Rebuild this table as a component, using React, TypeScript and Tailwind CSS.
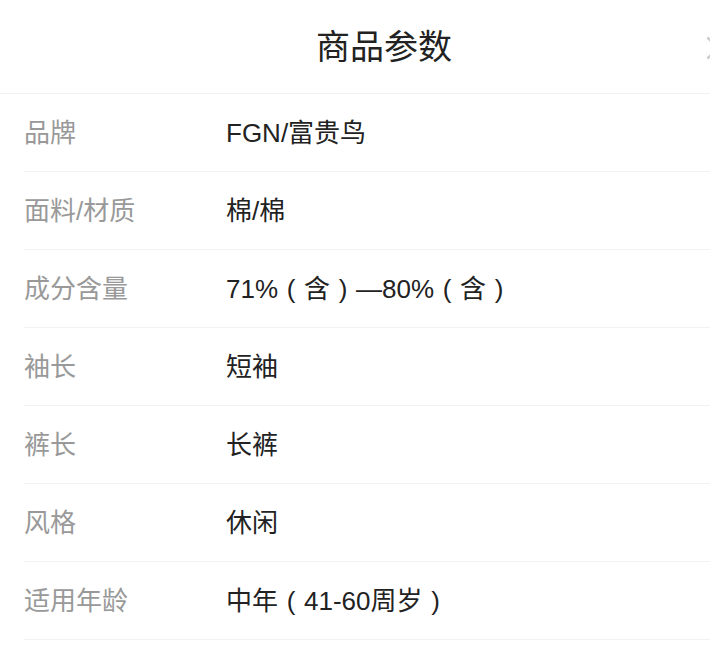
const params = [
  { label: "品牌", value: "FGN/富贵鸟" },
  { label: "面料/材质", value: "棉/棉" },
  { label: "成分含量", value: "71%（含）—80%（含）" },
  { label: "袖长", value: "短袖" },
  { label: "裤长", value: "长裤" },
  { label: "风格", value: "休闲" },
  { label: "适用年龄", value: "中年（41-60周岁）" },
];

// full-width brackets drawn centred in their cell, as in the reference font
const renderValue = (text: string) =>
  text.split(/([（）])/).map((part, i) =>
    part === "（" || part === "）" ? (
      <span key={i} className="inline-block w-[26px] text-center">
        {part === "（" ? "(" : ")"}
      </span>
    ) : (
      <span key={i}>{part}</span>
    )
  );

const App = () => {
  return (
    <div
      className="w-full h-[649px] overflow-hidden bg-white"
      style={{ fontFamily: '"Liberation Sans", "Noto Sans CJK SC", sans-serif' }}
    >
      <div className="relative w-[768px]">
        {/* header */}
        <div className="h-[94px] flex items-center justify-center border-b border-[#f2f2f2]">
          <h1 className="text-[34px] leading-none text-[#222]">商品参数</h1>
        </div>
        <svg
          className="absolute left-[705px] top-[35px] w-[26px] h-[26px]"
          viewBox="0 0 24 24"
          fill="none"
          stroke="#cccccc"
          strokeWidth="2.4"
          strokeLinecap="round"
        >
          <path d="M3 3 L21 21 M21 3 L3 21" />
        </svg>

        {/* rows */}
        <div className="pl-6">
          {params.map((p) => (
            <div
              key={p.label}
              className="h-[78px] flex items-center border-b border-[#f2f2f2]"
            >
              <div className="w-[202px] text-[26px] leading-none text-[#999]">{p.label}</div>
              <div className="text-[26px] leading-none text-[#222] whitespace-nowrap">
                {renderValue(p.value)}
              </div>
            </div>
          ))}
        </div>
      </div>
    </div>
  );
};

export default App;
